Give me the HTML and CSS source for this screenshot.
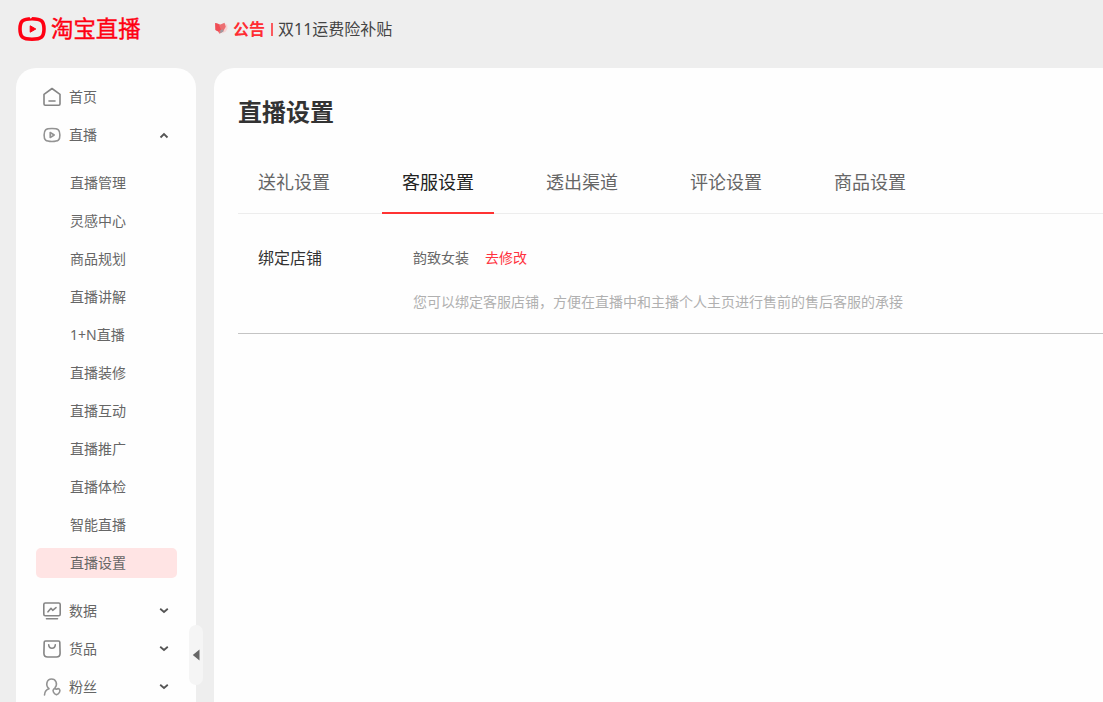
FILE: index.html
```html
<!DOCTYPE html>
<html lang="zh-CN">
  <head>
    <meta charset="UTF-8" />
    <meta name="viewport" content="width=device-width, initial-scale=1.0" />
    <title>直播设置</title>
    <link rel="stylesheet" href="styles.css">
  </head>
  <body>
    <!-- Header -->
    <header>
      <a class="logo" href="#">
        <svg width="30" height="26" viewBox="0 0 30 26">
          <path d="M15 2.800C24.300 2.800 27 5 27 13S24.300 23.200 15 23.200 3 21 3 13 5.700 2.800 15 2.800Z" fill="none" stroke="#ff0012" stroke-width="3.600" />
          <path d="M12.200.500l1.500 2.300 2-2.300z" fill="#eee" />
          <path d="M13.200 9.800v6.400l5.600-3.200z" fill="#ff0012" stroke="#ff0012" stroke-width="1" stroke-linejoin="round" />
        </svg>
        <span>淘宝直播</span>
      </a>
      <div class="notice">
        <svg width="16" height="14" viewBox="0 0 16 14">
          <path d="M10.500 1.500l2.700 1.200.3 3.800L12 9.500 8 11.500z" fill="#f7d3d3" />
          <path d="M1.200 1l5.300 1.500L10.500.7l1.300 4-2.600 4.500-3.900 2.500L4 9 1.500 8z" fill="#ec6f72" />
          <path d="M1.200 1l3.300 1L7 7.500 4.500 9.800 1.500 8z" fill="#f04d55" />
          <path d="M6.300 8.300l2.500-1 .8 1.900-3.300 2.200z" fill="#a09aa0" />
        </svg>
        <strong>公告</strong>
        <i></i>
        <span>双11运费险补贴</span>
      </div>
    </header>

    <div class="layout">
      <!-- Sidebar -->
      <aside class="sidebar">
        <nav>
          <a class="nav-item" href="#">
            <svg class="icon" viewBox="0 0 20 20">
              <path d="M2 7.300L10 1.500l8 5.800v9.700q0 1.200-1.200 1.200H3.200Q2 18.200 2 17zM7 14h6" />
            </svg>
            <span>首页</span>
          </a>
          <a class="nav-item" href="#">
            <svg class="icon" viewBox="0 0 20 20">
              <path class="light" d="M10 3.500c6.500 0 7.900 1.300 7.900 6.500s-1.400 6.500-7.900 6.500S2.100 15.200 2.100 10 3.500 3.500 10 3.500ZM8.200 7.500v5l4-2.500z" />
            </svg>
            <span>直播</span>
            <svg class="arrow" viewBox="0 0 10 10"><path d="M1.500 7.500L5 4 8.500 7.500" /></svg>
          </a>
          <div class="sub-menu">
            <a href="#">直播管理</a>
            <a href="#">灵感中心</a>
            <a href="#">商品规划</a>
            <a href="#">直播讲解</a>
            <a href="#">1+N直播</a>
            <a href="#">直播装修</a>
            <a href="#">直播互动</a>
            <a href="#">直播推广</a>
            <a href="#">直播体检</a>
            <a href="#">智能直播</a>
            <a href="#" class="active">直播设置</a>
          </div>
          <a class="nav-item" href="#">
            <svg class="icon" viewBox="0 0 20 20">
              <rect x="1.800" y="2" width="16.400" height="12.700" rx="1.500" />
              <path d="M6 10.800l3-3.500 1.700 2L14 6.600M4.500 17.800h11" />
            </svg>
            <span>数据</span>
            <svg class="arrow" viewBox="0 0 10 10"><path d="M1.200 2.800L5 6l3.800-3.200" /></svg>
          </a>
          <a class="nav-item" href="#">
            <svg class="icon" viewBox="0 0 20 20">
              <path d="M3.500 2h13q1.300 0 1.300 1.300l.3 11q0 3.700-3.700 3.700H5.600q-3.700 0-3.700-3.700l.3-11Q2.200 2 3.500 2ZM6.700 5.800c.3 4.600 6.300 4.600 6.600 0" />
            </svg>
            <span>货品</span>
            <svg class="arrow" viewBox="0 0 10 10"><path d="M1.200 2.800L5 6l3.800-3.200" /></svg>
          </a>
          <a class="nav-item" href="#">
            <svg class="icon" viewBox="0 0 20 20">
              <path class="light" d="M2.500 18c.2-4 1.800-5.500 4.500-6.300C2.900 8 5 2 9.500 2s6.500 5 3.500 8.700M14.500 12.300c2.200-1.700 4.200.4 3.100 2.700-.6 1.300-1.600 2.200-3.100 2.800-1.500-.6-2.500-1.500-3.100-2.800-1.100-2.300.9-4.400 3.100-2.700Z" />
            </svg>
            <span>粉丝</span>
            <svg class="arrow" viewBox="0 0 10 10"><path d="M1.200 2.800L5 6l3.800-3.200" /></svg>
          </a>
        </nav>
        <button class="collapse-btn" aria-label="收起">
          <svg width="8" height="12" viewBox="0 0 8 12"><path d="M7.500.5v11L.8 6z" fill="#666" /></svg>
        </button>
      </aside>

      <!-- Main Content -->
      <main>
        <h1>直播设置</h1>
        <div class="tabs">
          <a href="#">送礼设置</a>
          <a href="#" class="active">客服设置</a>
          <a href="#">透出渠道</a>
          <a href="#">评论设置</a>
          <a href="#">商品设置</a>
        </div>
        <section class="setting-row">
          <div class="setting-label">绑定店铺</div>
          <div class="setting-content">
            <div class="shop">
              <span>韵致女装</span>
              <a href="#">去修改</a>
            </div>
            <p>您可以绑定客服店铺，方便在直播中和主播个人主页进行售前的售后客服的承接</p>
          </div>
        </section>
      </main>
    </div>
  </body>
</html>
```
FILE: styles.css
```css
/* Basic Reset & Global Styles */
* {
  margin: 0;
  padding: 0;
  box-sizing: border-box;
}
body {
  height: 100vh;
  display: flex;
  flex-direction: column;
  overflow: hidden;
  background-color: #eee;
  color: #666;
  font-family: "Noto Sans", "Noto Sans CJK SC", sans-serif;
  font-size: 14px;
}
a {
  color: inherit;
  text-decoration: none;
}

/* Header */
header {
  height: 68px;
  flex-shrink: 0;
  display: flex;
  padding: 16px 0 0 17px;
}
.logo {
  width: 197px;
  height: 26px;
  display: flex;
  align-items: center;
  gap: 4px;
  color: #ff0012;
  font-size: 22.4px;
  line-height: 26px;
  -webkit-text-stroke: 0.4px #ff0012;
}
.notice {
  height: 26px;
  display: flex;
  align-items: center;
  color: #444;
  font-size: 16px;
  line-height: 26px;
}
.notice svg {
  margin-right: 3px;
}
.notice strong {
  color: #ff2d33;
}
.notice i {
  width: 2px;
  height: 13px;
  margin: 0 5px 0 6px;
  background-color: #fb5a5e;
}

/* Layout */
.layout {
  flex: 1;
  min-height: 0;
  display: flex;
  gap: 18px;
  padding-left: 16px;
}

/* Sidebar */
.sidebar {
  width: 180px;
  flex-shrink: 0;
  position: relative;
  padding-top: 10px;
  background-color: #fefefe;
  border-radius: 20px 20px 0 0;
}
.nav-item {
  height: 38px;
  display: flex;
  align-items: center;
  padding: 0 27px 0 26px;
}
.nav-item span {
  line-height: 20px;
}
.icon {
  width: 20px;
  height: 20px;
  margin-right: 7px;
  fill: none;
  stroke: #858585;
  stroke-width: 1.6;
  stroke-linecap: round;
  stroke-linejoin: round;
}
.icon .light {
  stroke: #939393;
}
.arrow {
  width: 10px;
  height: 10px;
  margin-left: auto;
  fill: none;
  stroke: #555;
  stroke-width: 1.8;
}
.sub-menu {
  display: flex;
  flex-direction: column;
  gap: 8px;
  padding: 14px 19px 14px 20px;
}
.sub-menu a {
  height: 30px;
  padding-left: 34px;
  border-radius: 5px;
  line-height: 30px;
}
.sub-menu .active {
  background-color: #ffe4e4;
}
.collapse-btn {
  position: absolute;
  top: 557px;
  right: -7px;
  width: 14px;
  height: 60px;
  display: flex;
  align-items: center;
  justify-content: center;
  border: none;
  border-radius: 7px;
  background-color: #f5f5f5;
}

/* Main Content */
main {
  flex: 1;
  padding: 24px 0 0 24px;
  background-color: #fefefe;
  border-radius: 20px 0 0 0;
}
h1 {
  color: #333;
  font-size: 24px;
  line-height: 40px;
}
.tabs {
  height: 62px;
  margin-top: 20px;
  display: flex;
  gap: 32px;
  border-bottom: 1px solid #ededed;
}
.tabs a {
  height: 62px;
  padding: 0 20px;
  font-size: 18px;
  line-height: 60px;
}
.tabs .active {
  color: #222;
  border-bottom: 2px solid #ff3333;
}
.setting-row {
  display: flex;
  padding: 30px 0 17px 20px;
  border-bottom: 1px solid #c4c4c4;
}
.setting-label {
  width: 155px;
  color: #333;
  font-size: 16px;
  line-height: 28px;
}
.shop {
  display: flex;
  gap: 16px;
  line-height: 28px;
}
.shop a {
  color: #ff3340;
}
.setting-content p {
  margin-top: 16px;
  color: #b0b0b0;
  line-height: 28px;
}
```
